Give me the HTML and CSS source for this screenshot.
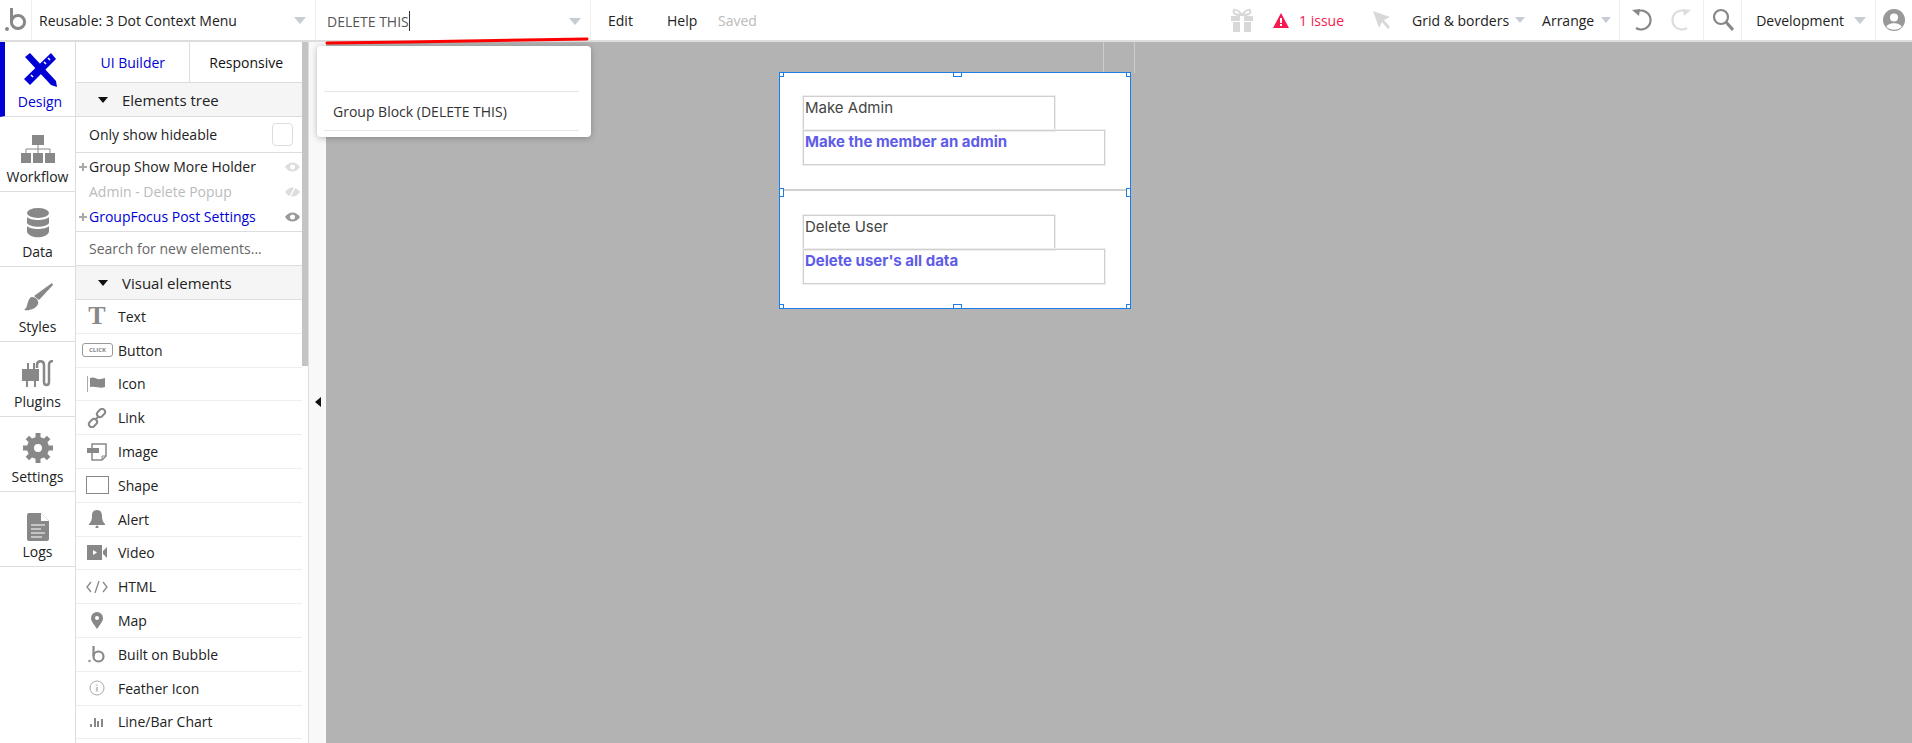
FILE: index.html
```html
<!DOCTYPE html>
<html lang="en">
<head>
    <meta charset="UTF-8">
    <meta name="viewport" content="width=device-width, initial-scale=1.0">
    <title>Bubble Editor</title>
    <link rel="stylesheet" href="styles.css">
</head>
<body>
    <header class="topbar">
        <div class="logo-cell">
            <svg width="26" height="28" viewBox="0 0 26 28"><circle cx="4" cy="24" r="2" fill="#888"/><circle cx="15" cy="17" r="6.6" fill="none" stroke="#888" stroke-width="3"/><path d="M8.5 3V17" stroke="#888" stroke-width="3"/></svg>
        </div>
        <div class="page-select">
            <span class="page-name">Reusable: 3 Dot Context Menu</span>
            <span class="caret caret-big"></span>
        </div>
        <div class="search-select">
            <span class="search-value">DELETE THIS</span><span class="text-cursor"></span>
            <span class="caret caret-big"></span>
        </div>
        <nav class="menu">
            <span class="menu-edit">Edit</span>
            <span class="menu-help">Help</span>
            <span class="menu-saved">Saved</span>
        </nav>
        <div class="tools">
            <svg class="tool-gift" width="28" height="26" viewBox="0 0 28 26"><path d="M3 9h22v5H3zM5 15h18v10H5z" fill="#d8d8d8"/><path d="M12 9h4v16h-4z" fill="#fff"/><path d="M14 8C9 1 4 2 6 6c1 2 5 2 8 2zM14 8c5-7 10-6 8-2-1 2-5 2-8 2z" fill="none" stroke="#d8d8d8" stroke-width="2"/></svg>
            <svg class="tool-alert" width="16" height="15" viewBox="0 0 16 15"><path d="M8 0l8 15H0z" fill="#f5194f"/><path d="M7 5h2v5H7zM7 11h2v2H7z" fill="#fff"/></svg>
            <span class="issue">1 issue</span>
            <svg class="tool-cursor" width="20" height="20" viewBox="0 0 20 20"><path d="M1 1l17 6-6 3 6 7-2 2-6-7-3 6z" fill="#d8d8d8"/></svg>
            <span class="tool-grid">Grid &amp; borders</span>
            <span class="caret caret-small"></span>
            <span class="tool-arrange">Arrange</span>
            <span class="caret caret-small"></span>
            <div class="tool-history">
                <svg width="22" height="24" viewBox="0 0 22 24"><path d="M5 4a9.500 9.500 0 1 1 0 16" fill="none" stroke="#888" stroke-width="2.200"/><path d="M1 2l8-1-1 7z" fill="#888"/></svg>
                <svg width="22" height="24" viewBox="0 0 22 24"><path d="M17 4a9.500 9.500 0 1 0 0 16" fill="none" stroke="#ddd" stroke-width="2.200"/><path d="M21 2l-8-1 1 7z" fill="#ddd"/></svg>
            </div>
            <div class="tool-search">
                <svg width="22" height="24" viewBox="0 0 22 24"><circle cx="9" cy="9" r="7" fill="none" stroke="#888" stroke-width="2.200"/><path d="M14 14l7 8" stroke="#888" stroke-width="3"/></svg>
            </div>
            <div class="tool-env">
                <span>Development</span>
                <span class="caret caret-big"></span>
            </div>
            <div class="tool-user">
                <svg width="22" height="22" viewBox="0 0 22 22"><circle cx="11" cy="11" r="11" fill="#999"/><circle cx="11" cy="8.500" r="4" fill="#fff"/><path d="M3.500 18c1-5 14-5 15 0-4 3.500-11 3.500-15 0z" fill="#fff"/></svg>
            </div>
        </div>
    </header>

    <div class="workspace">
        <aside class="sidenav">
            <div class="nav-item nav-active">
                <svg width="34" height="36" viewBox="0 0 34 36"><path d="M2 5L7 1 33 29 34 35 28 33z" fill="#0000d6"/><path d="M28 1l5 6L7 33l-6-6z" fill="#0000d6"/><path d="M25 6l2 2M21 10l2 2M8 23l2 2" stroke="#fff" stroke-width="1.500"/></svg>
                <span>Design</span>
            </div>
            <div class="nav-item">
                <svg width="34" height="28" viewBox="0 0 34 28"><path d="M11 0h12v10H11zM0 18h10v10H0zM12 18h10v10H12zM24 18h10v10H24z" fill="#888"/><path d="M17 10v8M5 18v-4h24v4" fill="none" stroke="#888"/></svg>
                <span>Workflow</span>
            </div>
            <div class="nav-item">
                <svg width="24" height="30" viewBox="0 0 24 30"><ellipse cx="12" cy="5" rx="11" ry="5" fill="#888"/><path d="M1 9c3 4 19 4 22 0v6c-3 5-19 5-22 0zM1 18c3 4 19 4 22 0v6c-3 7-19 7-22 0z" fill="#888"/></svg>
                <span>Data</span>
            </div>
            <div class="nav-item">
                <svg width="30" height="30" viewBox="0 0 30 30"><path d="M29 0l1 2-14 15-5-4z" fill="#888"/><path d="M9 14c4 0 7 3 6 7-2 5-9 7-14 6 3-2 3-5 4-8 1-3 2-5 4-5z" fill="#888"/></svg>
                <span>Styles</span>
            </div>
            <div class="nav-item">
                <svg width="32" height="28" viewBox="0 0 32 28"><path d="M0 9h17v12h-3v6h-2v-6H6v6H4v-6H0zM5 9V3h2v6zM11 9V3h2v6z" fill="#888"/><path d="M15 8V5c0-5 7-5 7 0v17c0 4 5 4 5 0V5c0-3 2-4 4-4" fill="none" stroke="#888" stroke-width="2.500"/></svg>
                <span>Plugins</span>
            </div>
            <div class="nav-item">
                <svg width="30" height="30" viewBox="0 0 30 30"><circle cx="15" cy="15" r="7.500" fill="none" stroke="#888" stroke-width="7"/><path d="M15 0v30M0 15h30M4.400 4.400l21.200 21.200M25.600 4.400L4.400 25.600" stroke="#888" stroke-width="5" stroke-dasharray="5 20 5"/></svg>
                <span>Settings</span>
            </div>
            <div class="nav-item nav-logs">
                <svg width="22" height="28" viewBox="0 0 22 28"><path d="M2 0h12l8 8v18a2 2 0 0 1-2 2H2a2 2 0 0 1-2-2V2a2 2 0 0 1 2-2z" fill="#888"/><path d="M14 0v8h8z" fill="#fff"/><path d="M4 12h14M4 16h10M4 20h14M4 24h11" stroke="#fff" stroke-width="1"/></svg>
                <span>Logs</span>
            </div>
        </aside>

        <section class="panel">
            <div class="panel-main">
                <div class="tabs">
                    <div class="tab tab-active">UI Builder</div>
                    <div class="tab">Responsive</div>
                </div>
                <div class="section-head"><span class="tri"></span>Elements tree</div>
                <div class="hideable">
                    <span>Only show hideable</span>
                    <span class="checkbox"></span>
                </div>
                <ul class="tree">
                    <li><span class="plus"></span><span class="tree-name">Group Show More Holder</span>
                        <svg class="eye" width="15" height="10" viewBox="0 0 15 10"><path d="M0 5c4-6 11-6 15 0-4 6-11 6-15 0z" fill="#ddd"/><circle cx="7.500" cy="5" r="2.500" fill="#fff"/></svg></li>
                    <li class="tree-hidden"><span class="tree-name">Admin - Delete Popup</span>
                        <svg class="eye" width="15" height="10" viewBox="0 0 15 10"><path d="M0 5c4-6 11-6 15 0-4 6-11 6-15 0z" fill="#ddd"/><path d="M5 10l5-10" stroke="#fff" stroke-width="1.500"/></svg></li>
                    <li class="tree-focus"><span class="plus"></span><span class="tree-name">GroupFocus Post Settings</span>
                        <svg class="eye" width="15" height="10" viewBox="0 0 15 10"><path d="M0 5c4-6 11-6 15 0-4 6-11 6-15 0z" fill="#999"/><circle cx="7.500" cy="5" r="2.500" fill="#fff"/></svg></li>
                </ul>
                <div class="element-search">Search for new elements...</div>
                <div class="section-head"><span class="tri"></span>Visual elements</div>
                <ul class="elements">
                    <li><span class="el-icon el-t">T</span>Text</li>
                    <li><span class="el-icon"><span class="el-click">CLICK</span></span>Button</li>
                    <li><span class="el-icon"><svg width="20" height="16" viewBox="0 0 20 16"><path d="M0 0h1v16H0z" fill="#aaa"/><path d="M3 2c5-2 6 2 11 1l4-1v9c-5 2-8-1-15 0z" fill="#888"/></svg></span>Icon</li>
                    <li><span class="el-icon"><svg width="20" height="20" viewBox="0 0 20 20"><g fill="none" stroke="#888" stroke-width="2"><rect x="9.500" y="2" width="9" height="6" rx="3" transform="rotate(-45 14 5)"/><rect x="1.500" y="12" width="9" height="6" rx="3" transform="rotate(-45 6 15)"/><path d="M8 12l4-4"/></g></svg></span>Link</li>
                    <li><span class="el-icon"><svg width="20" height="18" viewBox="0 0 20 18"><path d="M5 1h14v12l-4 4H5z" fill="none" stroke="#888" stroke-width="1.500"/><path d="M0 5h12v5H0z" fill="#888"/><path d="M15 17v-4h4" fill="none" stroke="#888"/></svg></span>Image</li>
                    <li><span class="el-icon"><span class="el-shape"></span></span>Shape</li>
                    <li><span class="el-icon"><svg width="16" height="18" viewBox="0 0 16 18"><path d="M8 0c4 0 5 3 5 6 0 4 1 6 3 8v1H0v-1c2-2 3-4 3-8 0-3 1-6 5-6z" fill="#888"/><circle cx="8" cy="17" r="1.500" fill="#888"/></svg></span>Alert</li>
                    <li><span class="el-icon"><svg width="20" height="15" viewBox="0 0 20 15"><path d="M0 0h15v15H0zM16 6l4-4v11l-4-4z" fill="#888"/><path d="M6 5l4 2.500-4 2.500z" fill="#fff"/></svg></span>Video</li>
                    <li><span class="el-icon"><svg width="22" height="12" viewBox="0 0 22 12"><path d="M5 1L1 6l4 5M17 1l4 5-4 5M13 0L9 12" fill="none" stroke="#888" stroke-width="1.300"/></svg></span>HTML</li>
                    <li><span class="el-icon"><svg width="12" height="17" viewBox="0 0 12 17"><path d="M6 17C2 11 0 9 0 6a6 6 0 0 1 12 0c0 3-2 5-6 11z" fill="#888"/><circle cx="6" cy="6" r="2" fill="#fff"/></svg></span>Map</li>
                    <li><span class="el-icon"><svg width="18" height="18" viewBox="0 0 18 18"><circle cx="1.500" cy="16" r="1.300" fill="#999"/><circle cx="10.500" cy="11.500" r="5" fill="none" stroke="#888" stroke-width="2.200"/><path d="M5.500 1v10" stroke="#888" stroke-width="2.200"/></svg></span>Built on Bubble</li>
                    <li><span class="el-icon"><svg width="16" height="16" viewBox="0 0 16 16"><circle cx="8" cy="8" r="7" fill="none" stroke="#aaa"/><path d="M8 7v4.500M8 4.500v1.200" stroke="#888"/></svg></span>Feather Icon</li>
                    <li><span class="el-icon"><svg width="14" height="11" viewBox="0 0 14 11"><path d="M0 8h2v3H0zM4 2h2v9H4zM7 5h2v6H7zM11 3h2v8h-2z" fill="#888"/></svg></span>Line/Bar Chart</li>
                </ul>
            </div>
            <div class="scrollbar"><div class="scroll-thumb"></div></div>
        </section>

        <div class="collapse-strip"><span class="collapse-arrow"></span></div>

        <main class="canvas">
            <span class="guide guide-one"></span>
            <span class="guide guide-two"></span>
            <div class="reusable">
                <div class="menu-item">
                    <div class="box box-short">Make Admin</div>
                    <div class="box box-long">Make the member an admin</div>
                </div>
                <div class="menu-item menu-item-last">
                    <div class="box box-short">Delete User</div>
                    <div class="box box-long">Delete user's all data</div>
                </div>
                <span class="handle h-tl"></span><span class="handle h-tc"></span><span class="handle h-tr"></span>
                <span class="handle h-ml"></span><span class="handle h-mr"></span>
                <span class="handle h-bl"></span><span class="handle h-bc"></span><span class="handle h-br"></span>
            </div>
        </main>
    </div>

    <div class="search-popup">
        <div class="popup-row popup-empty"></div>
        <div class="popup-row">Group Block (DELETE THIS)</div>
    </div>
    <svg class="red-mark" width="264" height="8" viewBox="0 0 264 8"><path d="M2 6C90 5 190 3 262 2" fill="none" stroke="#f00" stroke-width="3" stroke-linecap="round"/></svg>
</body>
</html>
```

FILE: styles.css
```css
* {
    box-sizing: border-box;
}
html, body {
    margin: 0;
    height: 743px;
    overflow: hidden;
}
body {
    font-family: "Open Sans", sans-serif;
    font-size: 14px;
    color: #222;
    background-color: #fff;
}
ul {
    list-style: none;
    margin: 0;
    padding: 0;
}

/* top bar */
.topbar {
    display: flex;
    height: 42px;
    border-bottom: 2px solid #ddd;
    background-color: #fff;
}
.logo-cell {
    width: 32px;
    padding: 5px 0 0 3px;
    border-right: 1px solid #eee;
}
.page-select {
    display: flex;
    align-items: center;
    justify-content: space-between;
    width: 284px;
    padding: 0 9px 0 7px;
    border-right: 1px solid #eee;
}
.search-select {
    display: flex;
    align-items: center;
    width: 275px;
    padding: 2px 9px 0 11px;
    border-right: 1px solid #eee;
    font-size: 14px;
    color: #555;
}
.search-select .caret {
    margin-left: auto;
}
.text-cursor {
    width: 1px;
    height: 20px;
    background-color: #333;
}
.caret {
    display: inline-block;
    width: 0;
    height: 0;
    border-style: solid;
    border-color: #c5ccd3 transparent transparent;
}
.caret-big {
    border-width: 7px 6px 0;
}
.caret-small {
    border-width: 6px 5px 0;
}
.menu {
    display: flex;
    align-items: center;
    padding-left: 17px;
}
.menu-edit {
    width: 59px;
}
.menu-help {
    width: 51px;
}
.menu-saved {
    color: #bbb;
}
.tools {
    display: flex;
    align-items: center;
    margin-left: auto;
}
.tool-gift {
    margin-right: 17px;
}
.tool-alert {
    margin-right: 10px;
}
.issue {
    margin-right: 28px;
    color: #f5194f;
}
.tool-cursor {
    margin-right: 20px;
}
.tool-grid {
    margin-right: 6px;
}
.tool-arrange {
    margin: 0 7px 0 17px;
}
.tool-history {
    display: flex;
    align-items: center;
    gap: 17px;
    height: 100%;
    margin-left: 8px;
    padding: 0 11px;
    border: solid #eee;
    border-width: 0 1px;
}
.tool-search {
    display: flex;
    align-items: center;
    justify-content: center;
    width: 38px;
    height: 100%;
    border-right: 1px solid #eee;
}
.tool-env {
    display: flex;
    align-items: center;
    gap: 10px;
    height: 100%;
    padding: 0 9px 0 14px;
    border-right: 1px solid #eee;
}
.tool-user {
    display: flex;
    align-items: center;
    justify-content: center;
    width: 36px;
}

/* layout under the bar */
.workspace {
    display: flex;
    height: 701px;
}
.sidenav {
    flex: none;
    width: 76px;
    border-right: 1px solid #ddd;
}
.nav-item {
    display: flex;
    flex-direction: column;
    align-items: center;
    justify-content: flex-end;
    position: relative;
    height: 75px;
    padding-bottom: 3px;
    border-bottom: 1px solid #ddd;
    line-height: 22px;
}
.nav-item svg {
    margin-bottom: 3px;
}
.nav-active {
    border-left: 5px solid #0000d6;
    color: #0000d6;
}
.nav-logs svg {
    margin-bottom: 0;
}
.panel {
    flex: none;
    display: flex;
    width: 233px;
    border-right: 1px solid #ddd;
}
.panel-main {
    width: 226px;
}
.scrollbar {
    width: 6px;
}
.scroll-thumb {
    height: 324px;
    background-color: #c4c4c4;
}
.tabs {
    display: flex;
    height: 41px;
    border-bottom: 1px solid #ddd;
}
.tab {
    display: flex;
    align-items: center;
    justify-content: center;
    width: 113px;
    color: #111;
}
.tab-active {
    width: 116px;
    border-right: 1px solid #ddd;
    color: #0000d6;
}
.section-head {
    display: flex;
    align-items: center;
    height: 34px;
    padding-left: 22px;
    border-bottom: 1px solid #ddd;
    background-color: #f5f5f5;
    font-size: 15px;
}
.tri {
    width: 0;
    height: 0;
    margin-right: 14px;
    border-style: solid;
    border-width: 6px 5px 0;
    border-color: #111 transparent transparent;
}
.hideable {
    display: flex;
    align-items: center;
    justify-content: space-between;
    height: 36px;
    padding: 0 9px 0 13px;
    border-bottom: 1px solid #ddd;
}
.checkbox {
    width: 21px;
    height: 23px;
    border: 1px solid #ddd;
    border-radius: 4px;
}
.tree {
    height: 79px;
    padding-top: 1px;
    border-bottom: 1px solid #ddd;
}
.tree li {
    display: flex;
    align-items: center;
    position: relative;
    height: 25px;
    padding-left: 13px;
}
.tree-hidden {
    color: #bbb;
}
.tree-focus {
    color: #0000d6;
}
.plus {
    position: absolute;
    left: 3px;
    top: 9px;
    width: 8px;
    height: 8px;
    background:
        linear-gradient(#aaa, #aaa) center / 8px 2px no-repeat,
        linear-gradient(#aaa, #aaa) center / 2px 8px no-repeat;
}
.eye {
    margin-left: auto;
    margin-right: 2px;
}
.element-search {
    display: flex;
    align-items: center;
    height: 34px;
    padding-left: 13px;
    border-bottom: 1px solid #ddd;
    color: #666;
}
.elements li {
    display: flex;
    align-items: center;
    height: 33.8px;
    border-bottom: 1px solid #eee;
}
.el-icon {
    display: flex;
    align-items: center;
    justify-content: center;
    flex: none;
    width: 42px;
    color: #888;
}
.el-t {
    font-family: "Liberation Serif", serif;
    font-size: 26px;
    font-weight: bold;
}
.el-click {
    width: 31px;
    height: 14px;
    margin-left: 1px;
    border: 1px solid #999;
    border-radius: 3px;
    font-size: 6px;
    font-weight: bold;
    line-height: 12px;
    text-align: center;
}
.el-shape {
    width: 23px;
    height: 18px;
    border: 1.5px solid #888;
}

/* strip with the collapse arrow */
.collapse-strip {
    flex: none;
    display: flex;
    align-items: center;
    justify-content: center;
    width: 17px;
    height: 100%;
    padding-top: 0;
    background-color: #f8f8f8;
}
.collapse-arrow {
    width: 0;
    height: 0;
    border-style: solid;
    border-width: 5px 6px 5px 0;
    border-color: transparent #111 transparent transparent;
    transform: translateY(9px);
}

/* canvas */
.canvas {
    position: relative;
    flex: 1;
    background-color: #b3b3b3;
}
.guide {
    position: absolute;
    top: 0;
    width: 1px;
    height: 31px;
    background-color: #ccc;
}
.guide-one {
    left: 777px;
}
.guide-two {
    left: 808px;
}
.reusable {
    position: absolute;
    left: 453px;
    top: 30px;
    width: 352px;
    height: 237px;
    border: 1px solid #1a7de8;
    background-color: #fff;
}
.menu-item {
    height: 118px;
    padding: 23px 0 0 23px;
    border-bottom: 2px solid #d0d0d0;
    font-family: Inter, sans-serif;
    font-size: 15px;
}
.menu-item-last {
    padding-top: 24px;
    border-bottom: 0;
}
.box {
    border: 1px solid #d0d0d0;
    box-shadow: 0 0 0 1px #eee;
    padding: 1px 1px 0;
    line-height: 20px;
}
.box-short {
    width: 252px;
    height: 35px;
    color: #444;
}
.box-long {
    width: 302px;
    height: 35px;
    margin-top: -1px;
    color: #5f5ce8;
    font-weight: bold;
}
.handle {
    position: absolute;
    width: 5px;
    height: 5px;
    border: 1px solid #1a7de8;
    background-color: #fff;
}
.h-tl { left: -1px; top: -1px; }
.h-tc { left: 173px; top: -1px; width: 9px; }
.h-tr { right: -1px; top: -1px; }
.h-ml { left: -1px; top: 115px; height: 9px; }
.h-mr { right: -1px; top: 115px; height: 9px; }
.h-bl { left: -1px; bottom: -1px; }
.h-bc { left: 173px; bottom: -1px; width: 9px; }
.h-br { right: -1px; bottom: -1px; }

/* dropdown and marker over the page */
.search-popup {
    position: absolute;
    left: 317px;
    top: 46px;
    width: 274px;
    height: 91px;
    padding: 0 12px 0 7px;
    border-radius: 4px;
    background-color: #fff;
    box-shadow: 0 1px 6px rgba(0, 0, 0, 0.25);
}
.popup-row {
    display: flex;
    align-items: center;
    height: 39px;
    padding-left: 9px;
    border-bottom: 1px solid #e6e6e6;
    color: #333;
}
.popup-empty {
    height: 46px;
}
.red-mark {
    position: absolute;
    left: 325px;
    top: 37px;
}
```
